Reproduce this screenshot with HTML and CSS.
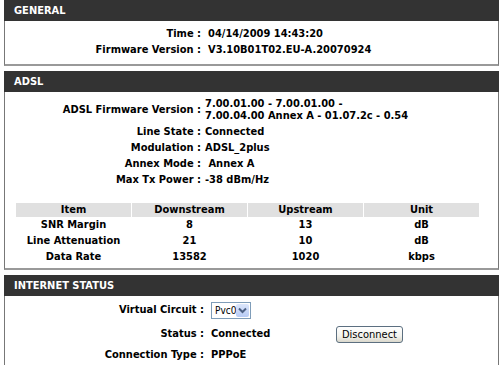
FILE: index.html
```html
<!DOCTYPE html>
<html lang="en">
<head>
    <meta charset="UTF-8">
    <title>Device Info</title>
    <link rel="stylesheet" href="styles.css">
</head>
<body>
    <div class="box general">
        <div class="box-head">GENERAL</div>
        <div class="box-body">
            <div class="field"><span class="label">Time :</span><span class="value">04/14/2009 14:43:20</span></div>
            <div class="field"><span class="label">Firmware Version :</span><span class="value">V3.10B01T02.EU-A.20070924</span></div>
        </div>
    </div>

    <div class="box adsl">
        <div class="box-head">ADSL</div>
        <div class="box-body">
            <div class="field two-line">
                <span class="label">ADSL Firmware Version :</span>
                <span class="value">7.00.01.00 - 7.00.01.00 -<br>7.00.04.00 Annex A - 01.07.2c - 0.54</span>
            </div>
            <div class="field"><span class="label">Line State :</span><span class="value">Connected</span></div>
            <div class="field"><span class="label">Modulation :</span><span class="value">ADSL_2plus</span></div>
            <div class="field"><span class="label">Annex Mode :</span><span class="value">&nbsp;Annex A</span></div>
            <div class="field"><span class="label">Max Tx Power :</span><span class="value">-38 dBm/Hz</span></div>

            <table class="stats">
                <thead>
                    <tr><th>Item</th><th>Downstream</th><th>Upstream</th><th>Unit</th></tr>
                </thead>
                <tbody>
                    <tr><td>SNR Margin</td><td>8</td><td>13</td><td>dB</td></tr>
                    <tr><td>Line Attenuation</td><td>21</td><td>10</td><td>dB</td></tr>
                    <tr><td>Data Rate</td><td>13582</td><td>1020</td><td>kbps</td></tr>
                </tbody>
            </table>
        </div>
    </div>

    <div class="box internet">
        <div class="box-head">INTERNET STATUS</div>
        <div class="box-body">
            <div class="field vc-row">
                <span class="label">Virtual Circuit :</span>
                <span class="value">
                    <span class="fake-select">
                        <span class="fake-select-text">Pvc0</span>
                        <span class="fake-select-arrow">
                            <svg width="9" height="7" viewBox="0 0 9 7"><path d="M1 1.5 L4.5 5 L8 1.5" fill="none" stroke="#4d6185" stroke-width="2"/></svg>
                        </span>
                    </span>
                </span>
            </div>
            <div class="field status-row">
                <span class="label">Status :</span>
                <span class="value status-value">Connected</span>
                <button class="xp-button">Disconnect</button>
            </div>
            <div class="field"><span class="label">Connection Type :</span><span class="value">PPPoE</span></div>
        </div>
    </div>
</body>
</html>
```

FILE: styles.css
```css
body {
    margin: 0;
    background-color: #FFFFFF;
    font-family: "DejaVu Sans Condensed", "DejaVu Sans", Tahoma, sans-serif;
    font-size: 11px;
    font-weight: bold;
    color: #000000;
}

.box {
    margin: 0 1px 5px 4px;
}

.box-head {
    height: 21px;
    line-height: 21px;
    padding-left: 10px;
    background-color: #333333;
    color: #FFFFFF;
    font-size: 11px;
}

.box-body {
    border-left: 1px solid #777777;
    border-right: 1px solid #777777;
    border-bottom: 2px solid #999999;
}

.general .box-body {
    padding: 5px 0 6px;
}

.adsl .box-body {
    padding: 6px 0 3px;
}

.internet .box-body {
    padding: 5px 0 2px;
}

.field {
    display: flex;
    align-items: center;
    line-height: 16px;
}

.label {
    text-align: right;
    white-space: nowrap;
}

.general .label {
    width: 196px;
    margin-right: 7px;
}

.adsl .label {
    width: 196px;
    margin-right: 4px;
}

.internet .label {
    width: 199px;
    margin-right: 7px;
}

.two-line {
    line-height: 12px;
    margin-bottom: 2px;
}

/* stats table under the adsl fields */
.stats {
    margin: 15px 0 0 10px;
    width: 465px;
    border-collapse: separate;
    border-spacing: 1px 0;
    table-layout: fixed;
}

.stats th {
    background-color: #E0E0E0;
    height: 14px;
    line-height: 14px;
    padding: 0;
}

.stats td {
    height: 16px;
    line-height: 16px;
    padding: 0;
    text-align: center;
}

/* internet status */
.vc-row {
    height: 18px;
    margin-bottom: 6px;
}

.fake-select {
    display: inline-flex;
    align-items: center;
    width: 38px;
    height: 15px;
    border: 1px solid #7F9DB9;
    background-color: #FFFFFF;
    vertical-align: middle;
}

.fake-select-text {
    flex: 1;
    padding-left: 3px;
    font-size: 10px;
    font-weight: normal;
    line-height: 15px;
}

.fake-select-arrow {
    width: 14px;
    height: 13px;
    margin-right: 1px;
    display: flex;
    align-items: center;
    justify-content: center;
    border-radius: 2px;
    background: linear-gradient(#DCE6FB, #B7CBF5);
}

.status-row {
    height: 18px;
    margin-bottom: 4px;
}

.status-value {
    width: 125px;
}

.xp-button {
    width: 67px;
    height: 17px;
    padding: 0;
    font-family: "DejaVu Sans Condensed", "DejaVu Sans", Tahoma, sans-serif;
    font-size: 11px;
    font-weight: normal;
    color: #000000;
    border: 1px solid #5C6F80;
    border-radius: 3px;
    background: linear-gradient(#FFFFFF, #F3F3EE 60%, #DAD8CC);
}
```
